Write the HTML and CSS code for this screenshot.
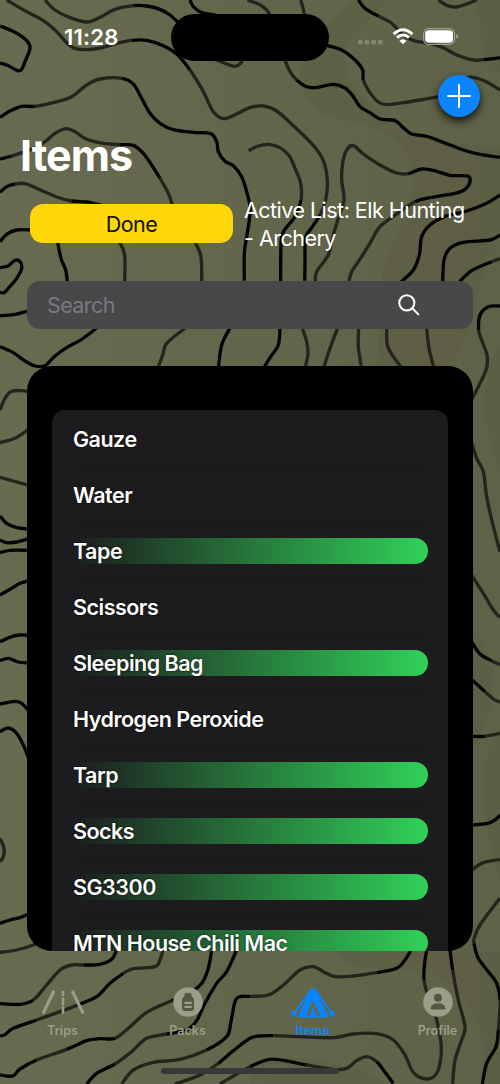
FILE: index.html
```html
<!DOCTYPE html>
<html lang="en">
<head>
<meta charset="utf-8">
<title>Items</title>
<link rel="stylesheet" href="styles.css">
</head>
<body>
<div class="screen">
  <svg class="terrain" viewBox="0 0 1500 3252" aria-hidden="true">
    <g class="shade">
      <path d="M1060 0C1000 60 920 120 900 200C890 300 950 350 1060 365C1180 385 1235 450 1240 540C1240 640 1150 760 1145 842L1130 1100L1340 1100C1450 1000 1420 800 1500 700L1500 440C1380 440 1320 420 1240 410C1130 330 1000 260 1040 130C1060 80 1130 60 1160 0Z"/>
      <path d="M1430 0C1440 90 1450 180 1500 220L1500 0Z"/>
      <path d="M1500 1040C1440 1100 1440 1300 1500 1400ZM1418 1880C1500 1980 1500 2100 1418 2250ZM1500 2190C1420 2280 1450 2500 1500 2640Z"/>
      <path d="M1000 2855C1080 2930 1180 2900 1290 2920C1420 2960 1460 3100 1450 3252L1500 3252L1500 2855ZM750 3190C900 3150 1080 3200 1160 3252L750 3252Z"/>
    </g>
    <g id="contours"></g>
  </svg>

  <header class="status">
    <div class="time">11:28</div>
    <div class="island"></div>
    <div class="indicators">
      <svg class="dots" viewBox="0 0 26 5"><rect x="0" width="4.6" height="4.6" rx="1.4"/><rect x="6.7" width="4.6" height="4.6" rx="1.4"/><rect x="13.4" width="4.6" height="4.6" rx="1.4"/><rect x="20.1" width="4.6" height="4.6" rx="1.4"/></svg>
      <svg class="wifi" viewBox="0 0 22 17"><path d="M1.6 6.1Q11-2.6 20.4 6.1M5 9.6Q11 4.4 17 9.6"/><path class="solid" d="M11 16.2L7.4 12.8Q11 9.7 14.6 12.8Z"/></svg>
      <svg class="battery" viewBox="0 0 36 17"><rect class="case" x=".6" y=".6" width="31" height="15.8" rx="5"/><rect class="charge" x="2.2" y="2.2" width="27.8" height="12.6" rx="3.6"/><path class="tip" d="M33.2 6v5q2-.7 2-2.5t-2-2.5z"/></svg>
    </div>
  </header>

  <div class="toolbar">
    <button class="add" aria-label="Add item"><svg viewBox="0 0 24 24"><path d="M12 1v22M1 12h22"/></svg></button>
  </div>

  <h1 class="title">Items</h1>

  <div class="listbar">
    <button class="done">Done</button>
    <p class="active-list">Active List: Elk Hunting<br>- Archery</p>
  </div>

  <div class="search">
    <span>Search</span>
    <svg viewBox="0 0 22 22"><circle cx="8.8" cy="8.8" r="7.6"/><path d="M14.4 14.4L20.2 20.2"/></svg>
  </div>

  <main class="card">
    <ul class="items">
      <li><span>Gauze</span></li>
      <li><span>Water</span></li>
      <li><span class="packed">Tape</span></li>
      <li><span>Scissors</span></li>
      <li><span class="packed">Sleeping Bag</span></li>
      <li><span>Hydrogen Peroxide</span></li>
      <li><span class="packed">Tarp</span></li>
      <li><span class="packed">Socks</span></li>
      <li><span class="packed">SG3300</span></li>
      <li><span class="packed">MTN House Chili Mac</span></li>
    </ul>
  </main>

  <nav class="tabs">
    <a class="tab">
      <svg viewBox="0 0 44 32"><path class="road" d="M12.400 5L2.600 25.400M31.800 5L41.600 25.400"/><path class="dash" d="M22 5v3M22 11.700v5.500M22 20.600v5"/></svg>
      <span>Trips</span>
    </a>
    <a class="tab">
      <svg viewBox="0 0 44 32"><circle cx="22" cy="15" r="14.800"/><path class="cut" d="M18.500 9V7.600Q18.500 6 20.100 6H23.900Q25.500 6 25.500 7.600V9Q28 10.500 28 13.500V21Q28 24 25 24H19Q16 24 16 21V13.500Q16 10.500 18.500 9Z"/><path d="M18.500 14.700H25.800V17H18.500ZM18.500 18.700H25.800V21H18.500Z"/></svg>
      <span>Packs</span>
    </a>
    <a class="tab current">
      <svg viewBox="0 0 44 32"><path d="M20.200 2Q22 -.8 23.800 2L29.200 10.500L37 28.500Q37.800 30.600 35.600 30.600H8.400Q6.200 30.600 7 28.500L14.800 10.500Z"/><path class="tent-cut" d="M22 13.500L14.700 28.600H29.300Z"/><path d="M22 19L18.600 29H25.400Z"/><path class="rope" d="M19.200 4L3.200 26.200M24.800 4L40.800 26.200M1.300 24.500L1.700 29L4.600 26.500M42.700 24.500L42.300 29L39.400 26.500"/><path class="seam" d="M14.600 12.500L7 26.800M29.400 12.500L37 26.800"/></svg>
      <span>Items</span>
    </a>
    <a class="tab">
      <svg viewBox="0 0 44 32"><circle cx="22" cy="15" r="14.800"/><circle class="cut" cx="22" cy="10.700" r="4"/><path class="cut" d="M14.700 21.300Q15.500 16.300 22 16.300Q28.500 16.300 29.300 21.300Q29.300 22.500 28 22.500H16Q14.700 22.500 14.700 21.300Z"/></svg>
      <span>Profile</span>
    </a>
  </nav>
  <div class="home-indicator"></div>
</div>
<script src="contours.js"></script>
</body>
</html>
```
FILE: styles.css
```css
* { box-sizing: border-box; }
body { margin: 0; font-family: Inter, "Liberation Sans", sans-serif; color: #fff; }
button { border: 0; padding: 0; font: inherit; }
.screen {
  position: relative;
  width: 500px;
  height: 1084px;
  overflow: hidden;
  display: flex;
  flex-direction: column;
  background: linear-gradient(90deg, #686b4f 0%, #63664b 48%, #5f6247 100%);
}
.screen > * { position: relative; flex: none; }
.screen > .terrain { position: absolute; left: 0; top: 0; width: 500px; height: 1084px; }
.shade { fill: #59573f; opacity: .25; }
.line { fill: none; stroke-width: 10; stroke-linejoin: round; }
.line-light { stroke: #24241c; }
.line-dark { stroke: #040403; }

.status { height: 61px; padding: 14px 41px 0 64px; display: grid; grid-template-columns: 107px 158px 1fr; }
.time { font-size: 22px; font-weight: 600; line-height: 47px; letter-spacing: .2px; }
.island { height: 47px; border-radius: 24px; background: #000; }
.indicators { display: flex; justify-content: flex-end; padding-top: 14px; }
.dots { width: 26px; height: 5px; margin: 12px 8px 0 0; fill: #83866f; }
.wifi { width: 22px; height: 17px; margin-right: 9px; fill: none; stroke: #fff; stroke-width: 3; }
.wifi .solid { fill: #fff; stroke: none; }
.battery { width: 36px; height: 17px; }
.case { fill: none; stroke: #a0a28f; stroke-width: 1.1; }
.charge { fill: #fff; }
.tip { fill: #a0a28f; }

.toolbar { height: 56px; padding: 14px 20px 0; display: flex; justify-content: flex-end; }
.add { width: 42px; height: 42px; border-radius: 50%; background: #0a84ff; display: grid; place-items: center; box-shadow: 0 4px 8px rgba(0,0,0,.8); }
.add svg { width: 24px; height: 24px; fill: none; stroke: #fff; stroke-width: 2; stroke-linecap: round; }

.title { margin: 13px 0 0 20px; font-size: 43px; line-height: 50px; font-weight: 700; letter-spacing: -1px; }

.listbar { display: flex; align-items: center; margin-top: 16px; padding-left: 30px; height: 56px; }
.done { width: 203px; height: 39px; margin-top: -1px; border-radius: 13px; background: #ffd60a; color: #111; font-size: 21.5px; letter-spacing: -.5px; }
.active-list { margin: 0 0 0 11px; font-size: 21.5px; line-height: 28px; letter-spacing: -.52px; white-space: nowrap; }

.search { margin: 29px 27px 0; height: 48px; border-radius: 13px; background: #48484a; display: flex; align-items: center; justify-content: space-between; padding: 0 53px 0 20px; font-size: 21.5px; letter-spacing: -.6px; color: #79797d; }
.search svg { width: 22px; height: 22px; fill: none; stroke: #fff; stroke-width: 2; stroke-linecap: round; }

.card { margin: 37px 27px 0; height: 585px; padding: 44px 25px 0; border-radius: 25px; background: #000; overflow: hidden; }
.items { list-style: none; margin: 0; padding: 1px 20px 0 21px; border-radius: 13px 13px 0 0; background: #1c1c1e; }
.items li { height: 56px; padding-top: 15px; border-bottom: 1px solid #161618; }
.items li:has(.packed) { padding-top: 15px; }
.items span { display: block; height: 26px; line-height: 26px; font-size: 21.5px; font-weight: 600; letter-spacing: -.5px; white-space: nowrap; text-shadow: 0 0 2px #000; }
.items .packed { border-radius: 13px; background: linear-gradient(90deg, rgba(48,209,88,0) 0%, #30d158 100%); }

.tabs { display: grid; grid-template-columns: repeat(4, 125px); margin-top: 36px; }
.tab { display: flex; flex-direction: column; align-items: center; color: #9b9d89; fill: currentColor; font-size: 12.5px; font-weight: 600; line-height: 18px; letter-spacing: .05px; }
.tab svg { width: 44px; height: 32px; margin-bottom: 3px; }
.tab.current { color: #0a84ff; }
.road, .dash, .rope { fill: none; stroke: currentColor; stroke-width: 3.2; stroke-linecap: round; }
.dash { stroke-width: 2.6; }
.rope { stroke-width: 2; }
.seam { fill: none; stroke: #63664b; stroke-width: 1; }
.cut { fill: #55573f; }
.tent-cut { fill: #63664b; }
.home-indicator { width: 178px; height: 6px; border-radius: 3px; margin: 28px 0 0 161px; background: #38383a; }
```
FILE: contours.js
```javascript
// Elevation lines: "d" (dark) and "l" (light) set the tone of the stretch that follows.
const contours = [
  "l 20,0 80,35 130,62 165,90 200,128 225,145 260,149 310,142 350,130 395,121 d 440,121 490,137 530,162 570,210 l 610,275 640,335 672,356 710,342 750,323 790,318 830,333 880,377 940,436 970,482 982,540 977,600 960,645 d 930,690 916,715 915,790 914,842",
  "l 135,0 165,30 210,53 262,66 300,52 345,28 400,17 d 440,18 480,28 510,45 535,68",
  "d 570,0 580,20 605,38 650,46",
  "l 742,0 780,14 800,30 812,48",
  "l 902,0 908,20 914,48",
  "d 1075,0 1095,25 1135,48 l 1170,66 1195,90 1215,110 1250,124 1290,130 1330,143 1370,165 1420,180 1450,179 d 1480,176 1500,173",
  "l 1315,0 1340,16 1370,21 1400,12 1430,0",
  "d 0,78 45,97 80,122 90,145 75,185 65,208 52,212 25,197 0,189",
  "d 0,352 30,333 65,319 105,319 l 160,308 215,290 260,255 300,237 365,235 d 400,252 425,295 450,340 480,370 520,389 580,397 632,401 650,425 655,455 675,484 700,497 725,530 740,575 750,620 748,660 740,710 733,760 733,842",
  "d 0,477 35,468 l 95,448 135,425 165,400 198,386 225,395 260,418 310,430 360,434 d 400,436 430,460 455,495 480,535 l 505,580 518,618",
  "d 0,577 20,560 45,552 l 75,551 120,569 170,591 215,603 d 260,606 305,616",
  "d 0,725 20,703 50,690 95,690",
  "d 0,803 25,797 45,781 60,785 65,805 50,835 25,865 12,878 0,877",
  "d 0,947 40,944 85,933",
  "d 0,1040 40,1058 75,1083 105,1098 135,1097 165,1068 200,1043 245,1018 290,984",
  "l 645,178 680,192 705,199 722,190 728,178",
  "l 854,178 870,215 890,240 d 915,258 945,263 1000,253 1035,264 1060,290 1080,320 1110,338 1140,357 1185,362 1210,383 1235,402 1280,409 1330,427 1390,450 1440,463 1500,472",
  "d 980,136 1025,150 1065,180 1088,210 1090,240 l 1110,278 1135,306 1160,314 1210,308 1260,300 1320,289",
  "l 1390,235 1420,232 1460,246 1500,270",
  "l 746,452 775,438 805,433 840,443 868,468 885,505 902,550 903,600 d 885,650 850,695 843,730 842,846",
  "l 946,846 950,815 985,765 997,715 1015,655 1032,600 1025,540 1028,490 1040,450 1060,437 1090,462 1140,495 1190,519 1225,521 d 1265,507 1310,514 1350,526 1403,528 1410,545 1395,568 1365,580 1290,593 1245,605 l 1200,635 1140,680 1110,730 1075,785 1055,815 1046,846",
  "d 1500,585 1455,612 1400,633 1335,650 1290,675 1265,710 1258,765 1240,810 1203,846",
  "d 1500,705 1470,720 1390,727 1350,745 1332,780 1328,846",
  "l 1500,776 1475,785 d 1415,812 1378,846",
  "d 1500,918 1465,920 1440,945 1436,990 l 1445,1020 1462,1070 1458,1110 1435,1160 1414,1200",
  "d 173,726 183,775 197,810 202,846",
  "l 358,726 374,765 374,846",
  "l 585,726 603,770 605,846",
  "l 556,984 500,1030 488,1065 473,1106",
  "d 690,984 665,1035 655,1106",
  "d 840,984 835,1035 812,1070 790,1106",
  "l 907,984 920,1025 924,1060 915,1106",
  "l 1013,984 990,1045 970,1106",
  "l 1076,984 1075,1040 1085,1106",
  "l 1160,984 1162,1035 1180,1070 1207,1106",
  "l 1280,984 1287,1045 1302,1106",
  "l 0,1230 15,1195 35,1174 65,1172 86,1176",
  "l 0,1328 45,1315 86,1288",
  "l 0,1432 40,1443 86,1456",
  "d 0,1548 20,1570 50,1583 86,1587",
  "d 0,1620 20,1628 50,1626 86,1616",
  "d 0,1658 30,1651 86,1651",
  "d 0,1785 35,1765 60,1750 86,1743",
  "d 0,1925 35,1910 60,1905 86,1906",
  "d 0,1982 25,1975 55,1986 86,1989",
  "d 0,2112 45,2104 65,2110 86,2132",
  "d 0,2195 25,2184 50,2200 70,2235 86,2275",
  "l 0,2515 12,2545 10,2570 0,2585",
  "d 0,2770 30,2760 60,2753 86,2742",
  "l 0,2857 50,2850 115,2830",
  "l 1414,1325 1430,1375 1450,1415 1460,1490 1480,1580 1500,1655",
  "l 1414,1724 1450,1780 1480,1830 1500,1852",
  "d 1414,1924 1440,1962 1475,1982 l 1500,1994",
  "d 1414,2038 1455,2075 l 1480,2097 1500,2107",
  "d 1414,2209 1455,2209 l 1500,2200",
  "d 1414,2475 1460,2471 1485,2460 1500,2445",
  "l 1414,2611 1450,2588 1500,2578",
  "l 1500,2695 1480,2720 1440,2775 1424,2810 1422,2830 d 1435,2875 1465,2915 1490,2950 1500,3000 l 1495,3090 d 1488,3140 1460,3190 1447,3252",
  "d 0,3011 60,3013 100,3000 l 140,2955 180,2910 215,2895 250,2895 d 300,2893 335,2878 350,2850",
  "d 0,3108 15,3104 40,3085 110,3060 l 180,3035 230,3016 d 290,2990 330,2950 370,2920 l 400,2906 465,2900 480,2880 489,2850",
  "d 0,3225 38,3228 60,3207 110,3180 l 200,3148 d 260,3122 300,3116 345,3115 l 385,3085 440,3037 515,3002 d 560,2985 605,2950 625,2905 635,2850",
  "d 260,3252 290,3220 345,3192 l 395,3155 440,3115 500,3102 d 560,3090 590,3062 615,3010 650,2950 680,2915 710,2850",
  "l 365,3252 400,3210 460,3187 540,3178 620,3150 d 680,3110 692,3070 705,3005 720,2990 750,2989 l 805,2985 850,2955 900,2910 940,2900 970,2915 1005,2930 1060,2928 1130,2918 d 1190,2905 1215,2880 1233,2850",
  "l 525,3252 600,3225 655,3190 d 700,3152 750,3115 780,3108 820,3107 l 900,3110 1000,3113 1060,3102 1130,3101 1180,3120 1215,3165 1240,3217 1280,3237 1310,3220 1323,3170 1322,3120 1305,3040 1285,2990 1272,2940 d 1274,2890 1280,2850",
  "l 660,3252 750,3200 d 810,3178 870,3185 920,3195 l 1000,3208 1040,3205 1070,3182 1100,3170 1130,3185 d 1150,3210 1180,3250",
  "d 1350,2850 1358,2910 l 1375,3000 1395,3080 1385,3120 1365,3180 1358,3252"
];

const layer = document.getElementById("contours");

function addPath(d, tone) {
  const path = document.createElementNS("http://www.w3.org/2000/svg", "path");
  path.setAttribute("d", d);
  path.setAttribute("class", "line " + (tone === "d" ? "line-dark" : "line-light"));
  layer.appendChild(path);
}

for (const contour of contours) {
  const points = [];
  let tone = "l";
  for (const token of contour.split(" ")) {
    if (token === "l" || token === "d") {
      tone = token;
      if (points.length) points[points.length - 1].tone = tone;
    } else {
      const [x, y] = token.split(",").map(Number);
      points.push({ x, y, tone });
    }
  }
  let d = "";
  for (let i = 0; i < points.length - 1; i++) {
    const a = points[i], b = points[i + 1];
    const before = points[i - 1] || a, after = points[i + 2] || b;
    if (!d) d = `M${a.x} ${a.y}`;
    d += `C${a.x + (b.x - before.x) / 6} ${a.y + (b.y - before.y) / 6} ${b.x - (after.x - a.x) / 6} ${b.y - (after.y - a.y) / 6} ${b.x} ${b.y}`;
    if (i === points.length - 2 || b.tone !== a.tone) {
      addPath(d, a.tone);
      d = "";
    }
  }
}
```
